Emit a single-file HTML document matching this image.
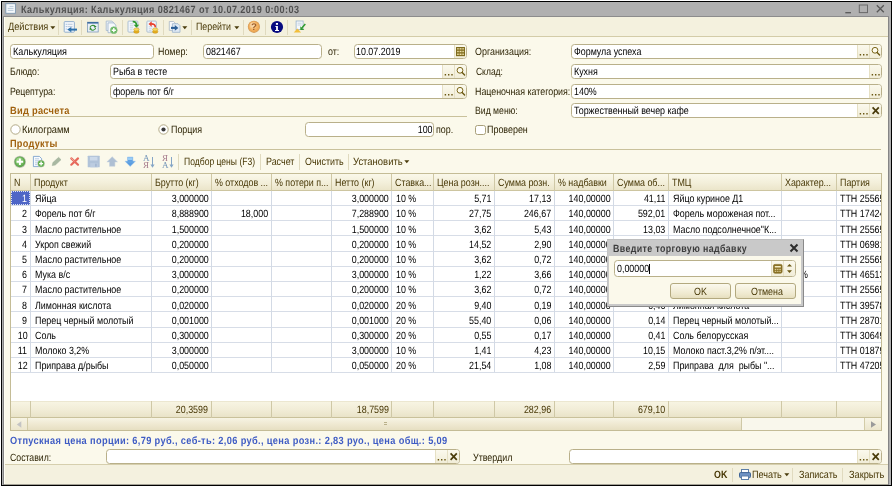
<!DOCTYPE html>
<html lang="ru"><head><meta charset="utf-8"><title>Калькуляция</title>
<style>
*{box-sizing:border-box;margin:0;padding:0}
html,body{width:892px;height:486px;overflow:hidden;background:#fff}
body{font-family:"Liberation Sans",sans-serif;font-size:10.5px;color:#000;position:relative;text-rendering:geometricPrecision}
#app{position:absolute;left:0;top:0;width:892px;height:486px;overflow:hidden;background:#fff;will-change:transform}
.a{position:absolute;white-space:nowrap}
.x{position:absolute;white-space:pre;transform:scale(0.8467,1);transform-origin:0 50%;height:14px;line-height:14px}
.xr{position:absolute;white-space:pre;transform:scale(0.8467,1);transform-origin:100% 50%;height:14px;line-height:14px}
.b{font-weight:bold}
.lb{color:#2e2506}
.br{color:#483806}
.in{position:absolute;background:#fff;border:1px solid #b9b08a;border-radius:3.5px;overflow:hidden}
.bt{position:absolute;top:0;bottom:0;background:linear-gradient(#fbf9ed,#f1edd8);border-left:1px solid #e6e0c4;color:#5a4a10}
.hd{color:#a0610e}
.ln{position:absolute;height:1px;background:#c9c19b}
.vs{position:absolute;width:1px;background:#e0dabf}
.c{position:absolute;overflow:hidden;white-space:nowrap}
.btn{position:absolute;border:1px solid #b3a97f;border-radius:3px;background:linear-gradient(#fbf9ee,#efe9cf 70%,#e6dfbf);color:#4a3c0c}
</style></head>
<body>
<div id="app">
<div class="a" style="left:1px;top:1px;width:891px;height:485px;background:#000"></div>
<div class="a" style="left:2px;top:2px;width:889px;height:483px;background:#b0b0b0"></div>
<div class="a" style="left:3px;top:17px;width:1px;height:468px;background:#858585"></div>
<div class="a" style="left:888px;top:17px;width:1px;height:468px;background:#858585"></div>
<div class="a" style="left:4px;top:17px;width:884px;height:467px;background:#fbf9eb"></div>
<div class="a" style="left:4px;top:484px;width:884px;height:1px;background:#a3a196"></div>
<div class="x b" style="top:3px;left:21.17px;transform:scale(0.863,1);letter-spacing:0.5px;color:#505050">Калькуляция: Калькуляция 0821467 от 10.07.2019 0:00:03</div>
<svg class="a" style="left:5px;top:3px" width="12" height="12" viewBox="0 0 12 12"><rect x="0.8" y="0.7" width="9.6" height="9.6" fill="#f6f9fc" stroke="#7d97b0" stroke-width="0.9"/><path d="M4.5 3.4H8.5M2.8 5.4H8.5M2.8 7.4H8.5" stroke="#b4c5d6" stroke-width="0.9"/></svg>
<svg class="a" style="left:843px;top:3px" width="44" height="13" viewBox="0 0 44 13"><path d="M2.3 9.7H8" stroke="#585858" stroke-width="1.3"/><rect x="16.3" y="2" width="8.2" height="7.6" fill="none" stroke="#6a6a6a" stroke-width="1"/><path d="M33.8 2.3L40.8 9.3M40.8 2.3L33.8 9.3" stroke="#585858" stroke-width="1.3"/></svg>
<div class="a" style="left:3px;top:16px;width:886px;height:1px;background:#8c8c8c"></div>
<div class="a" style="left:4px;top:17px;width:884px;height:19px;background:#f4f1de"></div>
<div class="a" style="left:4px;top:17px;width:1px;height:467px;background:#fffef4"></div>
<div class="ln" style="left:4px;top:36px;width:884px;background:#d3cca8"></div>
<div class="x br" style="top:20px;left:7.76px;transform:scale(0.8757,1);">Действия</div>
<svg class="a" style="left:50px;top:25.6px" width="6" height="4" viewBox="0 0 6 4"><path d="M0.3 0.3H5.3L2.8 3.2Z" fill="#4a3c0c"/></svg>
<div class="vs" style="left:58.3px;top:19.5px;height:15.0px"></div>
<svg class="a" style="left:63px;top:20px" width="15" height="14" viewBox="63 20 15 14"><rect x="64.2" y="21.6" width="10.2" height="10.6" rx="0.8" fill="#f3f7fb" stroke="#8aa9ca" stroke-width="0.9"/><path d="M67.5 24.3H72.5M67.5 26.6H72.5" stroke="#b5c4d6" stroke-width="0.9"/><path d="M65.8 24.3h0.9M65.8 26.6h0.9M65.8 29h0.9" stroke="#7fa6d4" stroke-width="0.9"/><path d="M77 29.6H70.5" stroke="#2c70ad" stroke-width="2"/><path d="M71.3 26.9L67.2 29.6L71.3 32.3Z" fill="#2c70ad"/></svg>
<div class="vs" style="left:81.2px;top:19.5px;height:15.0px"></div>
<svg class="a" style="left:86px;top:20px" width="14" height="14" viewBox="86 20 14 14"><rect x="87.4" y="22.2" width="10.8" height="9.8" fill="#e9f0f7" stroke="#7f9cbc" stroke-width="0.8"/><rect x="87.4" y="22" width="10.8" height="1.6" fill="#3f6d9f"/><path d="M90 27.6A2.9 2.5 0 0 1 95 26.2" fill="none" stroke="#3c923c" stroke-width="1.1"/><path d="M93.8 25.6L96.6 26.3L94.7 28.3Z" fill="#2f872f"/><path d="M95.6 28A2.9 2.5 0 0 1 90.6 29.4" fill="none" stroke="#3c923c" stroke-width="1.1"/><path d="M91.8 30L89 29.3L90.9 27.3Z" fill="#2f872f"/></svg>
<svg class="a" style="left:105px;top:19.5px" width="13.5" height="14.5" viewBox="105 19.5 13.5 14.5"><path d="M106.2 20.6H112L114 22.6V30H106.2Z" fill="#eef3f8" stroke="#a3b7cc" stroke-width="0.8"/><path d="M108 22.4H113.6L115.8 24.6V32.2H108Z" fill="#f6f9fc" stroke="#9db3ca" stroke-width="0.8"/><circle cx="113.8" cy="29.7" r="3.4" fill="#62b45a" stroke="#8cc486" stroke-width="0.8"/><path d="M113.8 27.6V31.8M111.7 29.7H115.9" stroke="#fff" stroke-width="1.4"/></svg>
<div class="vs" style="left:122.4px;top:19.5px;height:15.0px"></div>
<svg class="a" style="left:126.5px;top:19.5px" width="13.5" height="14.5" viewBox="126.5 19.5 13.5 14.5"><rect x="127.5" y="20.6" width="9.8" height="11" rx="0.8" fill="#f4f7fb" stroke="#9ab2cc" stroke-width="0.8"/><path d="M129.3 23.3H133M129.3 25.3H133M129.3 27.3H132.6M129.3 29.3H132" stroke="#bccbdc" stroke-width="0.8"/><path d="M132.2 21.2Q135.8 20.9 135.9 24.6" fill="none" stroke="#2f9a30" stroke-width="1.7"/><path d="M133.2 24.2H138.7L135.9 27.2Z" fill="#2f9a30"/><ellipse cx="135.9" cy="31.2" rx="2.7" ry="1.6" fill="#e8b020" stroke="#c08a10" stroke-width="0.5"/><ellipse cx="135.9" cy="29" rx="2.7" ry="1.6" fill="#f8d860" stroke="#c89818" stroke-width="0.5"/></svg>
<svg class="a" style="left:145.5px;top:19.5px" width="13.5" height="14.5" viewBox="145.5 19.5 13.5 14.5"><rect x="146.4" y="20.6" width="9.4" height="11" rx="0.8" fill="#f4f7fb" stroke="#9ab2cc" stroke-width="0.8"/><path d="M148.2 26.3H152M148.2 28.3H151.4M148.2 30.1H151" stroke="#bccbdc" stroke-width="0.8"/><path d="M154.8 26.8Q154.8 23.3 150.6 23.4" fill="none" stroke="#e8402c" stroke-width="1.7"/><path d="M151.2 20.7V26.2L148 23.5Z" fill="#e8402c"/><ellipse cx="154.7" cy="31.2" rx="2.7" ry="1.6" fill="#e8b020" stroke="#c08a10" stroke-width="0.5"/><ellipse cx="154.7" cy="29" rx="2.7" ry="1.6" fill="#f8d860" stroke="#c89818" stroke-width="0.5"/></svg>
<div class="vs" style="left:163.3px;top:19.5px;height:15.0px"></div>
<svg class="a" style="left:168px;top:20px" width="13.5" height="14" viewBox="168 20 13.5 14"><path d="M169.3 21.5H173.6L175.3 23.2V30.4H169.3Z" fill="#f6f8fb" stroke="#aab6c4" stroke-width="0.8"/><path d="M172.4 23.7H178L180 25.7V32.3H172.4Z" fill="#dfe9f4" stroke="#9ab2cc" stroke-width="0.8"/><path d="M171 27.9H175.6" stroke="#2b5f97" stroke-width="2.1"/><path d="M174.8 25.1L178.4 27.9L174.8 30.7Z" fill="#2b5f97"/></svg>
<svg class="a" style="left:182.4px;top:25.9px" width="6" height="4" viewBox="0 0 6 4"><path d="M0.3 0.3H5.3L2.8 3.2Z" fill="#4a3c0c"/></svg>
<div class="vs" style="left:191.3px;top:19.5px;height:15.0px"></div>
<div class="x br" style="top:20px;left:196.38px;transform:scale(0.8412,1);">Перейти</div>
<svg class="a" style="left:233.5px;top:25.9px" width="6" height="4" viewBox="0 0 6 4"><path d="M0.3 0.3H5.3L2.8 3.2Z" fill="#4a3c0c"/></svg>
<div class="vs" style="left:242.6px;top:19.5px;height:15.0px"></div>
<svg class="a" style="left:247px;top:19.5px" width="14" height="14.0" viewBox="247 19.5 14 14.0"><circle cx="253.9" cy="26.3" r="6.1" fill="#cf9a5c"/><circle cx="253.8" cy="26.2" r="5.5" fill="#eda855"/><circle cx="253.5" cy="25.7" r="4.4" fill="#f3b567"/><circle cx="253" cy="25" r="3.2" fill="#f8c98a"/><circle cx="252.6" cy="24.4" r="2" fill="#fcdcae"/><text x="253.9" y="29.6" text-anchor="middle" font-family="Liberation Sans, sans-serif" font-weight="bold" font-size="9.6" fill="#a0602c">?</text></svg>
<div class="vs" style="left:264.5px;top:19.5px;height:15.0px"></div>
<svg class="a" style="left:270px;top:19.5px" width="14" height="14.0" viewBox="270 19.5 14 14.0"><circle cx="277" cy="26.5" r="6.1" fill="#070a80"/><path d="M275.4 25.4H277.9V29.4H279V30.6H275V29.4H276.1V26.6H275.4Z" fill="#fff"/><rect x="275.9" y="22.5" width="2.1" height="1.8" fill="#fff"/></svg>
<div class="vs" style="left:287.3px;top:19.5px;height:15.0px"></div>
<svg class="a" style="left:292.5px;top:20px" width="13.5" height="13.5" viewBox="292.5 20 13.5 13.5"><rect x="295.6" y="21" width="7" height="8.6" fill="#f6f9fc" stroke="#9ab2cc" stroke-width="0.8"/><path d="M297 23.2H301.2M297 25H301.2" stroke="#bccbdc" stroke-width="0.8"/><path d="M304.8 24L301.3 28" stroke="#2f9a30" stroke-width="1.5"/><path d="M299.8 26.2V30H303.8Z" fill="#2f9a30"/><path d="M293.2 32.4L296.9 28.5L300.6 32.4Z" fill="#f2bf3c"/></svg>
<div class="in" style="left:10.2px;top:44px;width:143.8px;height:14.8px;"></div>
<div class="x" style="top:45px;left:12.67px;transform:scale(0.8616,1);">Калькуляция</div>
<div class="x lb" style="top:45px;left:158.38px;">Номер:</div>
<div class="in" style="left:203.3px;top:44px;width:118.7px;height:14.8px;"></div>
<div class="x" style="top:45px;left:205.68px;">0821467</div>
<div class="x lb" style="top:45px;left:328.38px;">от:</div>
<div class="in" style="left:354px;top:44px;width:113px;height:14.8px;"><div class="bt" style="right:0px;width:12px"><svg viewBox="0 0 12 13" width="12" height="13" style="position:absolute;left:0;top:0"><rect x="1.6" y="2.6" width="7.8" height="8" fill="#efe3aa" stroke="#7a6518" stroke-width="1.1"/><path d="M1.6 5.2H9.4M1.6 7.9H9.4" stroke="#7a6518" stroke-width="1.2"/><path d="M4.2 3V10.6M6.9 3V10.6" stroke="#8a7428" stroke-width="0.9"/></svg></div></div>
<div class="x" style="top:45px;left:356.38px;">10.07.2019</div>
<div class="x lb" style="top:45px;left:475.48px;transform:scale(0.8498,1);">Организация:</div>
<div class="in" style="left:571.3px;top:44px;width:310.7px;height:14.8px;"><div class="bt" style="right:0px;width:12px"><svg viewBox="0 0 12 13" width="12" height="13" style="position:absolute;left:0;top:0"><circle cx="5" cy="5.3" r="2.9" fill="#fdfbee" stroke="#7a6518" stroke-width="1"/><path d="M7.1 7.4L9.6 9.9" stroke="#6b5813" stroke-width="1.4" stroke-linecap="round"/></svg></div><div class="bt" style="right:12px;width:12px"><svg viewBox="0 0 12 13" width="12" height="13" style="position:absolute;left:0;top:0"><path d="M1.7 9h1.4v1.4h-1.4zM5 9h1.4v1.4h-1.4zM8.3 9h1.4v1.4h-1.4z" fill="#6b5813"/></svg></div></div>
<div class="x" style="top:45px;left:573.68px;">Формула успеха</div>
<div class="x lb" style="top:65px;left:10.19px;transform:scale(0.8268,1);">Блюдо:</div>
<div class="in" style="left:110.3px;top:64px;width:356.7px;height:14.8px;"><div class="bt" style="right:0px;width:12px"><svg viewBox="0 0 12 13" width="12" height="13" style="position:absolute;left:0;top:0"><circle cx="5" cy="5.3" r="2.9" fill="#fdfbee" stroke="#7a6518" stroke-width="1"/><path d="M7.1 7.4L9.6 9.9" stroke="#6b5813" stroke-width="1.4" stroke-linecap="round"/></svg></div><div class="bt" style="right:12px;width:12px"><svg viewBox="0 0 12 13" width="12" height="13" style="position:absolute;left:0;top:0"><path d="M1.7 9h1.4v1.4h-1.4zM5 9h1.4v1.4h-1.4zM8.3 9h1.4v1.4h-1.4z" fill="#6b5813"/></svg></div></div>
<div class="x" style="top:65px;left:112.68px;">Рыба в тесте</div>
<div class="x lb" style="top:65px;left:475.5px;transform:scale(0.8077,1);">Склад:</div>
<div class="in" style="left:571.3px;top:64px;width:310.7px;height:14.8px;"><div class="bt" style="right:0px;width:12px"><svg viewBox="0 0 12 13" width="12" height="13" style="position:absolute;left:0;top:0"><path d="M1.7 9h1.4v1.4h-1.4zM5 9h1.4v1.4h-1.4zM8.3 9h1.4v1.4h-1.4z" fill="#6b5813"/></svg></div></div>
<div class="x" style="top:65px;left:573.68px;">Кухня</div>
<div class="x lb" style="top:85px;left:10.18px;transform:scale(0.8335,1);">Рецептура:</div>
<div class="in" style="left:110.3px;top:83.9px;width:356.7px;height:14.9px;"><div class="bt" style="right:0px;width:12px"><svg viewBox="0 0 12 13" width="12" height="13" style="position:absolute;left:0;top:0"><circle cx="5" cy="5.3" r="2.9" fill="#fdfbee" stroke="#7a6518" stroke-width="1"/><path d="M7.1 7.4L9.6 9.9" stroke="#6b5813" stroke-width="1.4" stroke-linecap="round"/></svg></div><div class="bt" style="right:12px;width:12px"><svg viewBox="0 0 12 13" width="12" height="13" style="position:absolute;left:0;top:0"><path d="M1.7 9h1.4v1.4h-1.4zM5 9h1.4v1.4h-1.4zM8.3 9h1.4v1.4h-1.4z" fill="#6b5813"/></svg></div></div>
<div class="x" style="top:85px;left:112.68px;">форель пот б/г</div>
<div class="x lb" style="top:85px;left:475.48px;transform:scale(0.8434,1);">Наценочная категория:</div>
<div class="in" style="left:571.3px;top:83.9px;width:310.7px;height:14.9px;"><div class="bt" style="right:0px;width:12px"><svg viewBox="0 0 12 13" width="12" height="13" style="position:absolute;left:0;top:0"><path d="M1.7 9h1.4v1.4h-1.4zM5 9h1.4v1.4h-1.4zM8.3 9h1.4v1.4h-1.4z" fill="#6b5813"/></svg></div></div>
<div class="x" style="top:85px;left:573.68px;">140%</div>
<div class="x b hd" style="top:104px;left:10.16px;transform:scale(0.884,1);letter-spacing:0.3px;">Вид расчета</div>
<div class="ln" style="left:10.3px;top:116.1px;width:456.5px"></div>
<div class="x lb" style="top:104px;left:475.19px;transform:scale(0.8261,1);">Вид меню:</div>
<div class="in" style="left:571.3px;top:103.4px;width:310.7px;height:14.9px;"><div class="bt" style="right:0px;width:12px"><svg viewBox="0 0 12 13" width="12" height="13" style="position:absolute;left:0;top:0"><path d="M2.6 3.4L8.8 9.8M8.8 3.4L2.6 9.8" stroke="#4a3c0c" stroke-width="1.7"/></svg></div><div class="bt" style="right:12px;width:12px"><svg viewBox="0 0 12 13" width="12" height="13" style="position:absolute;left:0;top:0"><path d="M1.7 9h1.4v1.4h-1.4zM5 9h1.4v1.4h-1.4zM8.3 9h1.4v1.4h-1.4z" fill="#6b5813"/></svg></div></div>
<div class="x" style="top:104px;left:573.68px;">Торжественный вечер кафе</div>
<svg class="a" style="left:10px;top:124.2px" width="11" height="11" viewBox="0 0 11 11"><circle cx="5.5" cy="5.5" r="4.7" fill="#fff" stroke="#a9a07a" stroke-width="0.9"/></svg>
<div class="x lb" style="top:123px;left:22.16px;transform:scale(0.8829,1);">Килограмм</div>
<svg class="a" style="left:158.3px;top:124.2px" width="11" height="11" viewBox="0 0 11 11"><circle cx="5.5" cy="5.5" r="4.7" fill="#fff" stroke="#a9a07a" stroke-width="0.9"/><circle cx="5.5" cy="5.5" r="2.1" fill="#3a3a3a"/></svg>
<div class="x lb" style="top:123px;left:170.58px;">Порция</div>
<div class="in" style="left:305.3px;top:122.4px;width:129.0px;height:14.6px;"></div>
<div class="xr" style="top:123px;right:459.08px;">100</div>
<div class="x lb" style="top:123px;left:436.38px;">пор.</div>
<div class="a" style="left:475.3px;top:124.5px;width:10.5px;height:10.5px;border:1px solid #a9a07a;border-radius:2.5px;background:#fff"></div>
<div class="x lb" style="top:123px;left:487.38px;transform:scale(0.8499,1);">Проверен</div>
<div class="x b hd" style="top:137px;left:10.16px;transform:scale(0.873,1);letter-spacing:0.3px;">Продукты</div>
<div class="ln" style="left:10.3px;top:148.9px;width:871px"></div>
<svg class="a" style="left:13px;top:154.5px" width="14" height="14.0" viewBox="13 154.5 14 14.0"><circle cx="19.9" cy="161.4" r="6.1" fill="#c3c6b8"/><circle cx="19.9" cy="161.3" r="5.4" fill="#5ea44d"/><circle cx="19.7" cy="161" r="4.6" fill="#6db45a"/><circle cx="19.3" cy="160.4" r="3.6" fill="#85c470"/><circle cx="18.8" cy="159.7" r="2.3" fill="#a0d68b"/><path d="M19.9 158V164.6M16.6 161.3H23.2" stroke="#fff" stroke-width="1.9"/></svg>
<svg class="a" style="left:32px;top:155px" width="14" height="13.5" viewBox="32 155 14 13.5"><path d="M33.4 156.4H39.4L41.6 158.6V166.6H33.4Z" fill="#f7fafd" stroke="#6f98c8" stroke-width="0.8"/><path d="M35 158.8H39M35 160.8H40M35 162.8H38M35 164.6H37.4" stroke="#a9c0dc" stroke-width="0.8"/><circle cx="41.1" cy="163.7" r="3.6" fill="#b4bfa6"/><circle cx="41.1" cy="163.6" r="3.1" fill="#5fb04e"/><path d="M41.1 161.6V165.6M39.1 163.6H43.1" stroke="#fff" stroke-width="1.4"/></svg>
<svg class="a" style="left:51px;top:156px" width="11.5" height="11" viewBox="51 156 11.5 11"><path d="M52.2 165.6L52.9 162.6L58.6 157.3L61 159.7L55.3 165Z" fill="#a9b8a2" stroke="#9caf98" stroke-width="0.5"/></svg>
<svg class="a" style="left:69px;top:156px" width="11.5" height="11" viewBox="69 156 11.5 11"><path d="M71.3 158.4L78 164.7M78 158.4L71.3 164.7" stroke="#e6695c" stroke-width="2.2" stroke-linecap="round"/><path d="M71.6 158.6L74.2 161" stroke="#f5a99c" stroke-width="1" stroke-linecap="round"/></svg>
<svg class="a" style="left:86.5px;top:154.5px" width="13.5" height="13.0" viewBox="86.5 154.5 13.5 13.0"><rect x="87.2" y="155.2" width="12" height="11.6" rx="0.6" fill="#b1c3d9"/><rect x="89.4" y="156.4" width="7.6" height="3.6" fill="#cddaea"/><rect x="89.8" y="162.6" width="7.4" height="4.2" fill="#bccce0"/><rect x="94.6" y="163.2" width="1.6" height="3" fill="#a2b6d0"/></svg>
<svg class="a" style="left:105.5px;top:155.5px" width="12.5" height="11.0" viewBox="105.5 155.5 12.5 11.0"><path d="M111.7 156.2L117 161.4H114.4V165.8H109V161.4H106.4Z" fill="#aebfd3" stroke="#c4d0de" stroke-width="0.5"/></svg>
<svg class="a" style="left:124px;top:155.5px" width="12.5" height="11.0" viewBox="124 155.5 12.5 11.0"><path d="M130.2 165.9L135.4 160.7H132.9V156.5H127.5V160.7H125Z" fill="#5a9ce0" stroke="#9cc6ee" stroke-width="0.5"/><path d="M127.8 156.8H132.6V159.6H127.8Z" fill="#9accf5"/><path d="M126.2 160.9H134.2L133 162.1H127.4Z" fill="#6aaae6"/></svg>
<svg class="a" style="left:143.1px;top:154.5px" width="12.5" height="14" viewBox="0 0 12.5 14"><text x="0" y="6.3" font-family="Liberation Serif, serif" font-size="9" fill="#7294b8">А</text><text x="0" y="13.4" font-family="Liberation Serif, serif" font-size="9" fill="#a67b8c">Я</text><path d="M9.5 2V11" stroke="#85a5c6" stroke-width="1"/><path d="M7.4 9.6L9.5 12.8L11.6 9.6Z" fill="#85a5c6"/></svg>
<svg class="a" style="left:161.8px;top:154.5px" width="12.5" height="14" viewBox="0 0 12.5 14"><text x="0" y="6.3" font-family="Liberation Serif, serif" font-size="9" fill="#a67b8c">Я</text><text x="0" y="13.4" font-family="Liberation Serif, serif" font-size="9" fill="#7294b8">А</text><path d="M9.5 2V11" stroke="#85a5c6" stroke-width="1"/><path d="M7.4 9.6L9.5 12.8L11.6 9.6Z" fill="#85a5c6"/></svg>
<div class="vs" style="left:178.2px;top:153.5px;height:16.0px"></div>
<div class="x br" style="top:155px;left:184.39px;transform:scale(0.8158,1);">Подбор цены (F3)</div>
<div class="vs" style="left:259.6px;top:153.5px;height:16.0px"></div>
<div class="x br" style="top:155px;left:266.17px;transform:scale(0.8502,1);">Расчет</div>
<div class="vs" style="left:299.2px;top:153.5px;height:16.0px"></div>
<div class="x br" style="top:155px;left:304.98px;transform:scale(0.8445,1);">Очистить</div>
<div class="vs" style="left:348.2px;top:153.5px;height:16.0px"></div>
<div class="x br" style="top:155px;left:353.05px;transform:scale(0.9016,1);">Установить</div>
<svg class="a" style="left:404.2px;top:160.2px" width="6" height="4" viewBox="0 0 6 4"><path d="M0.3 0.3H5.3L2.8 3.2Z" fill="#4a3c0c"/></svg>
<div class="a" style="left:10.3px;top:173.4px;width:871.5px;height:257.6px;background:#fff;border:1px solid #c4bc96;overflow:hidden">
<div class="a" style="left:0;top:0;width:869.5px;height:16.6px;background:linear-gradient(#faf8ea,#f3efda 55%,#ebe5ca);border-bottom:1px solid #cdc5a0"></div>
<div class="a" style="left:18.7px;top:0;width:1px;height:16.6px;background:#cfc8a6"></div>
<div class="a" style="left:139.5px;top:0;width:1px;height:16.6px;background:#cfc8a6"></div>
<div class="a" style="left:199.7px;top:0;width:1px;height:16.6px;background:#cfc8a6"></div>
<div class="a" style="left:259.9px;top:0;width:1px;height:16.6px;background:#cfc8a6"></div>
<div class="a" style="left:320.0px;top:0;width:1px;height:16.6px;background:#cfc8a6"></div>
<div class="a" style="left:380.0px;top:0;width:1px;height:16.6px;background:#cfc8a6"></div>
<div class="a" style="left:422.0px;top:0;width:1px;height:16.6px;background:#cfc8a6"></div>
<div class="a" style="left:482.4px;top:0;width:1px;height:16.6px;background:#cfc8a6"></div>
<div class="a" style="left:542.7px;top:0;width:1px;height:16.6px;background:#cfc8a6"></div>
<div class="a" style="left:602.0px;top:0;width:1px;height:16.6px;background:#cfc8a6"></div>
<div class="a" style="left:656.8px;top:0;width:1px;height:16.6px;background:#cfc8a6"></div>
<div class="a" style="left:769.5px;top:0;width:1px;height:16.6px;background:#cfc8a6"></div>
<div class="a" style="left:824.6px;top:0;width:1px;height:16.6px;background:#cfc8a6"></div>
<div class="x br" style="top:1.6px;left:2.78px;">N</div>
<div class="x br" style="top:1.6px;left:22.78px;">Продукт</div>
<div class="x br" style="top:1.6px;left:143.58px;">Брутто (кг)</div>
<div class="x br" style="top:1.6px;left:203.78px;">% отходов ...</div>
<div class="x br" style="top:1.6px;left:263.98px;">% потери п...</div>
<div class="x br" style="top:1.6px;left:324.08px;">Нетто (кг)</div>
<div class="x br" style="top:1.6px;left:384.08px;">Ставка...</div>
<div class="x br" style="top:1.6px;left:426.08px;">Цена розн....</div>
<div class="x br" style="top:1.6px;left:486.48px;">Сумма розн.</div>
<div class="x br" style="top:1.6px;left:546.78px;">% надбавки</div>
<div class="x br" style="top:1.6px;left:606.08px;">Сумма об...</div>
<div class="x br" style="top:1.6px;left:660.88px;">ТМЦ</div>
<div class="x br" style="top:1.6px;left:773.58px;">Характер...</div>
<div class="x br" style="top:1.6px;left:828.68px;">Партия</div>
<div class="a" style="left:0;top:30.6px;width:869.5px;height:1px;background:#d7dde7"></div>
<div class="a" style="left:0;top:45.6px;width:869.5px;height:1px;background:#d7dde7"></div>
<div class="a" style="left:0;top:60.6px;width:869.5px;height:1px;background:#d7dde7"></div>
<div class="a" style="left:0;top:76.6px;width:869.5px;height:1px;background:#d7dde7"></div>
<div class="a" style="left:0;top:91.6px;width:869.5px;height:1px;background:#d7dde7"></div>
<div class="a" style="left:0;top:106.6px;width:869.5px;height:1px;background:#d7dde7"></div>
<div class="a" style="left:0;top:121.6px;width:869.5px;height:1px;background:#d7dde7"></div>
<div class="a" style="left:0;top:136.6px;width:869.5px;height:1px;background:#d7dde7"></div>
<div class="a" style="left:0;top:152.6px;width:869.5px;height:1px;background:#d7dde7"></div>
<div class="a" style="left:0;top:167.6px;width:869.5px;height:1px;background:#d7dde7"></div>
<div class="a" style="left:0;top:182.6px;width:869.5px;height:1px;background:#d7dde7"></div>
<div class="a" style="left:0;top:197.6px;width:869.5px;height:1px;background:#d7dde7"></div>
<div class="a" style="left:18.7px;top:16.6px;width:1px;height:181px;background:#d3dae5"></div>
<div class="a" style="left:139.5px;top:16.6px;width:1px;height:181px;background:#d3dae5"></div>
<div class="a" style="left:199.7px;top:16.6px;width:1px;height:181px;background:#d3dae5"></div>
<div class="a" style="left:259.9px;top:16.6px;width:1px;height:181px;background:#d3dae5"></div>
<div class="a" style="left:320.0px;top:16.6px;width:1px;height:181px;background:#d3dae5"></div>
<div class="a" style="left:380.0px;top:16.6px;width:1px;height:181px;background:#d3dae5"></div>
<div class="a" style="left:422.0px;top:16.6px;width:1px;height:181px;background:#d3dae5"></div>
<div class="a" style="left:482.4px;top:16.6px;width:1px;height:181px;background:#d3dae5"></div>
<div class="a" style="left:542.7px;top:16.6px;width:1px;height:181px;background:#d3dae5"></div>
<div class="a" style="left:602.0px;top:16.6px;width:1px;height:181px;background:#d3dae5"></div>
<div class="a" style="left:656.8px;top:16.6px;width:1px;height:181px;background:#d3dae5"></div>
<div class="a" style="left:769.5px;top:16.6px;width:1px;height:181px;background:#d3dae5"></div>
<div class="a" style="left:824.6px;top:16.6px;width:1px;height:181px;background:#d3dae5"></div>
<div class="a" style="left:-0.5px;top:16.6px;width:19.2px;height:14px;background:#4f66c6;outline:1px dotted #dfe5f7;outline-offset:-1px"></div>
<div class="xr" style="top:17.6px;right:853.48px;color:#fff;">1</div>
<div class="x" style="top:17.6px;left:23.28px;">Яйца</div>
<div class="xr" style="top:17.6px;right:672.48px;">3,000000</div>
<div class="xr" style="top:17.6px;right:492.18px;">3,000000</div>
<div class="x" style="top:17.6px;left:384.58px;">10 %</div>
<div class="xr" style="top:17.6px;right:389.78px;">5,71</div>
<div class="xr" style="top:17.6px;right:329.48px;">17,13</div>
<div class="xr" style="top:17.6px;right:270.18px;">140,00000</div>
<div class="xr" style="top:17.6px;right:215.38px;">41,11</div>
<div class="x" style="top:17.6px;left:661.38px;">Яйцо куриное Д1</div>
<div class="x" style="top:17.6px;left:829.18px;">ТТН 2556587</div>
<div class="xr" style="top:32.6px;right:853.48px;">2</div>
<div class="x" style="top:32.6px;left:23.28px;">Форель пот б/г</div>
<div class="xr" style="top:32.6px;right:672.48px;">8,888900</div>
<div class="xr" style="top:32.6px;right:612.28px;">18,000</div>
<div class="xr" style="top:32.6px;right:492.18px;">7,288900</div>
<div class="x" style="top:32.6px;left:384.58px;">10 %</div>
<div class="xr" style="top:32.6px;right:389.78px;">27,75</div>
<div class="xr" style="top:32.6px;right:329.48px;">246,67</div>
<div class="xr" style="top:32.6px;right:270.18px;">140,00000</div>
<div class="xr" style="top:32.6px;right:215.38px;">592,01</div>
<div class="x" style="top:32.6px;left:661.38px;">Форель мороженая пот...</div>
<div class="x" style="top:32.6px;left:829.18px;">ТТН 1742431</div>
<div class="xr" style="top:48.6px;right:853.48px;">3</div>
<div class="x" style="top:48.6px;left:23.28px;">Масло растительное</div>
<div class="xr" style="top:48.6px;right:672.48px;">1,500000</div>
<div class="xr" style="top:48.6px;right:492.18px;">1,500000</div>
<div class="x" style="top:48.6px;left:384.58px;">10 %</div>
<div class="xr" style="top:48.6px;right:389.78px;">3,62</div>
<div class="xr" style="top:48.6px;right:329.48px;">5,43</div>
<div class="xr" style="top:48.6px;right:270.18px;">140,00000</div>
<div class="xr" style="top:48.6px;right:215.38px;">13,03</div>
<div class="x" style="top:48.6px;left:661.38px;">Масло подсолнечное&quot;К...</div>
<div class="x" style="top:48.6px;left:829.18px;">ТТН 2556587</div>
<div class="xr" style="top:63.6px;right:853.48px;">4</div>
<div class="x" style="top:63.6px;left:23.28px;">Укроп свежий</div>
<div class="xr" style="top:63.6px;right:672.48px;">0,200000</div>
<div class="xr" style="top:63.6px;right:492.18px;">0,200000</div>
<div class="x" style="top:63.6px;left:384.58px;">10 %</div>
<div class="xr" style="top:63.6px;right:389.78px;">14,52</div>
<div class="xr" style="top:63.6px;right:329.48px;">2,90</div>
<div class="xr" style="top:63.6px;right:270.18px;">140,00000</div>
<div class="xr" style="top:63.6px;right:215.38px;">6,96</div>
<div class="x" style="top:63.6px;left:661.38px;">Укроп свежий</div>
<div class="x" style="top:63.6px;left:829.18px;">ТТН 0698123</div>
<div class="xr" style="top:78.6px;right:853.48px;">5</div>
<div class="x" style="top:78.6px;left:23.28px;">Масло растительное</div>
<div class="xr" style="top:78.6px;right:672.48px;">0,200000</div>
<div class="xr" style="top:78.6px;right:492.18px;">0,200000</div>
<div class="x" style="top:78.6px;left:384.58px;">10 %</div>
<div class="xr" style="top:78.6px;right:389.78px;">3,62</div>
<div class="xr" style="top:78.6px;right:329.48px;">0,72</div>
<div class="xr" style="top:78.6px;right:270.18px;">140,00000</div>
<div class="xr" style="top:78.6px;right:215.38px;">1,73</div>
<div class="x" style="top:78.6px;left:661.38px;">Масло подсолнечное&quot;К...</div>
<div class="x" style="top:78.6px;left:829.18px;">ТТН 2556587</div>
<div class="xr" style="top:93.6px;right:853.48px;">6</div>
<div class="x" style="top:93.6px;left:23.28px;">Мука в/с</div>
<div class="xr" style="top:93.6px;right:672.48px;">3,000000</div>
<div class="xr" style="top:93.6px;right:492.18px;">3,000000</div>
<div class="x" style="top:93.6px;left:384.58px;">10 %</div>
<div class="xr" style="top:93.6px;right:389.78px;">1,22</div>
<div class="xr" style="top:93.6px;right:329.48px;">3,66</div>
<div class="xr" style="top:93.6px;right:270.18px;">140,00000</div>
<div class="xr" style="top:93.6px;right:215.38px;">8,78</div>
<div class="x" style="top:93.6px;left:661.38px;">Мука пшеничная в/с</div>
<div class="xr" style="top:93.6px;right:73.18px;">М54-28%</div>
<div class="x" style="top:93.6px;left:829.18px;">ТТН 4651380</div>
<div class="xr" style="top:108.6px;right:853.48px;">7</div>
<div class="x" style="top:108.6px;left:23.28px;">Масло растительное</div>
<div class="xr" style="top:108.6px;right:672.48px;">0,200000</div>
<div class="xr" style="top:108.6px;right:492.18px;">0,200000</div>
<div class="x" style="top:108.6px;left:384.58px;">10 %</div>
<div class="xr" style="top:108.6px;right:389.78px;">3,62</div>
<div class="xr" style="top:108.6px;right:329.48px;">0,72</div>
<div class="xr" style="top:108.6px;right:270.18px;">140,00000</div>
<div class="xr" style="top:108.6px;right:215.38px;">1,73</div>
<div class="x" style="top:108.6px;left:661.38px;">Масло подсолнечное&quot;К...</div>
<div class="x" style="top:108.6px;left:829.18px;">ТТН 2556587</div>
<div class="xr" style="top:124.6px;right:853.48px;">8</div>
<div class="x" style="top:124.6px;left:23.28px;">Лимонная кислота</div>
<div class="xr" style="top:124.6px;right:672.48px;">0,020000</div>
<div class="xr" style="top:124.6px;right:492.18px;">0,020000</div>
<div class="x" style="top:124.6px;left:384.58px;">20 %</div>
<div class="xr" style="top:124.6px;right:389.78px;">9,40</div>
<div class="xr" style="top:124.6px;right:329.48px;">0,19</div>
<div class="xr" style="top:124.6px;right:270.18px;">140,00000</div>
<div class="xr" style="top:124.6px;right:215.38px;">0,46</div>
<div class="x" style="top:124.6px;left:661.38px;">Лимонная кислота</div>
<div class="x" style="top:124.6px;left:829.18px;">ТТН 3957801</div>
<div class="xr" style="top:139.6px;right:853.48px;">9</div>
<div class="x" style="top:139.6px;left:23.28px;">Перец черный молотый</div>
<div class="xr" style="top:139.6px;right:672.48px;">0,001000</div>
<div class="xr" style="top:139.6px;right:492.18px;">0,001000</div>
<div class="x" style="top:139.6px;left:384.58px;">20 %</div>
<div class="xr" style="top:139.6px;right:389.78px;">55,40</div>
<div class="xr" style="top:139.6px;right:329.48px;">0,06</div>
<div class="xr" style="top:139.6px;right:270.18px;">140,00000</div>
<div class="xr" style="top:139.6px;right:215.38px;">0,14</div>
<div class="x" style="top:139.6px;left:661.38px;">Перец черный молотый...</div>
<div class="x" style="top:139.6px;left:829.18px;">ТТН 2870145</div>
<div class="xr" style="top:154.6px;right:853.48px;">10</div>
<div class="x" style="top:154.6px;left:23.28px;">Соль</div>
<div class="xr" style="top:154.6px;right:672.48px;">0,300000</div>
<div class="xr" style="top:154.6px;right:492.18px;">0,300000</div>
<div class="x" style="top:154.6px;left:384.58px;">20 %</div>
<div class="xr" style="top:154.6px;right:389.78px;">0,55</div>
<div class="xr" style="top:154.6px;right:329.48px;">0,17</div>
<div class="xr" style="top:154.6px;right:270.18px;">140,00000</div>
<div class="xr" style="top:154.6px;right:215.38px;">0,41</div>
<div class="x" style="top:154.6px;left:661.38px;">Соль белорусская</div>
<div class="x" style="top:154.6px;left:829.18px;">ТТН 3064912</div>
<div class="xr" style="top:169.6px;right:853.48px;">11</div>
<div class="x" style="top:169.6px;left:23.28px;">Молоко 3,2%</div>
<div class="xr" style="top:169.6px;right:672.48px;">3,000000</div>
<div class="xr" style="top:169.6px;right:492.18px;">3,000000</div>
<div class="x" style="top:169.6px;left:384.58px;">10 %</div>
<div class="xr" style="top:169.6px;right:389.78px;">1,41</div>
<div class="xr" style="top:169.6px;right:329.48px;">4,23</div>
<div class="xr" style="top:169.6px;right:270.18px;">140,00000</div>
<div class="xr" style="top:169.6px;right:215.38px;">10,15</div>
<div class="x" style="top:169.6px;left:661.38px;">Молоко паст.3,2% п/эт....</div>
<div class="x" style="top:169.6px;left:829.18px;">ТТН 0187934</div>
<div class="xr" style="top:184.6px;right:853.48px;">12</div>
<div class="x" style="top:184.6px;left:23.28px;">Приправа д/рыбы</div>
<div class="xr" style="top:184.6px;right:672.48px;">0,050000</div>
<div class="xr" style="top:184.6px;right:492.18px;">0,050000</div>
<div class="x" style="top:184.6px;left:384.58px;">20 %</div>
<div class="xr" style="top:184.6px;right:389.78px;">21,54</div>
<div class="xr" style="top:184.6px;right:329.48px;">1,08</div>
<div class="xr" style="top:184.6px;right:270.18px;">140,00000</div>
<div class="xr" style="top:184.6px;right:215.38px;">2,59</div>
<div class="x" style="top:184.6px;left:661.38px;">Приправа  для  рыбы &quot;...</div>
<div class="x" style="top:184.6px;left:829.18px;">ТТН 4720561</div>
<div class="a" style="left:0;top:226.6px;width:869.5px;height:17px;background:linear-gradient(#f7f4e2,#f1ecd6 55%,#e9e3c8);border-top:1px solid #ece7d0;border-bottom:1px solid #c9c19b"></div>
<div class="a" style="left:18.7px;top:226.6px;width:1px;height:17px;background:#cfc8a6"></div>
<div class="a" style="left:139.5px;top:226.6px;width:1px;height:17px;background:#cfc8a6"></div>
<div class="a" style="left:199.7px;top:226.6px;width:1px;height:17px;background:#cfc8a6"></div>
<div class="a" style="left:259.9px;top:226.6px;width:1px;height:17px;background:#cfc8a6"></div>
<div class="a" style="left:320.0px;top:226.6px;width:1px;height:17px;background:#cfc8a6"></div>
<div class="a" style="left:380.0px;top:226.6px;width:1px;height:17px;background:#cfc8a6"></div>
<div class="a" style="left:422.0px;top:226.6px;width:1px;height:17px;background:#cfc8a6"></div>
<div class="a" style="left:482.4px;top:226.6px;width:1px;height:17px;background:#cfc8a6"></div>
<div class="a" style="left:542.7px;top:226.6px;width:1px;height:17px;background:#cfc8a6"></div>
<div class="a" style="left:602.0px;top:226.6px;width:1px;height:17px;background:#cfc8a6"></div>
<div class="a" style="left:656.8px;top:226.6px;width:1px;height:17px;background:#cfc8a6"></div>
<div class="a" style="left:769.5px;top:226.6px;width:1px;height:17px;background:#cfc8a6"></div>
<div class="a" style="left:824.6px;top:226.6px;width:1px;height:17px;background:#cfc8a6"></div>
<div class="xr br" style="top:228.6px;right:672.48px;">20,3599</div>
<div class="xr br" style="top:228.6px;right:492.18px;">18,7599</div>
<div class="xr br" style="top:228.6px;right:329.48px;">282,96</div>
<div class="xr br" style="top:228.6px;right:215.38px;">679,10</div>
<div class="a" style="left:0;top:243.6px;width:869.5px;height:12px;background:#f9f7ec"></div>
<div class="a" style="left:0;top:243.6px;width:17px;height:12px;background:linear-gradient(#f7f4e4,#ece6cd);border-right:1px solid #d3cca8"><svg width="17" height="13" viewBox="0 0 17 13" style="position:absolute;left:0;top:0"><path d="M10.3 3.2V9.8L5.8 6.5Z" fill="#c4c4c4"/></svg></div>
<div class="a" style="left:17px;top:243.6px;width:714.1px;height:12px;background:linear-gradient(#f7f4e4,#efe9d2 50%,#e6dfc2);border-right:1px solid #cfc8a6"><div class="a" style="left:355.5px;top:4px;width:3px;height:1px;background:#b9b08a"></div><div class="a" style="left:355.5px;top:6px;width:3px;height:1px;background:#b9b08a"></div></div>
<div class="a" style="left:853.1px;top:243.6px;width:16.4px;height:12px;background:linear-gradient(#f7f4e4,#ece6cd);border-left:1px solid #d3cca8"><svg width="17" height="13" viewBox="0 0 17 13" style="position:absolute;left:0;top:0"><path d="M6 3.2V9.8L11 6.5Z" fill="#9a9a9a"/></svg></div>
</div>
<div class="x b" style="top:434px;left:10.46px;transform:scale(0.8794,1);letter-spacing:0.4px;color:#3f5cc4">Отпускная цена порции: 6,79 руб., себ-ть: 2,06 руб., цена розн.: 2,83 руо., цена общ.: 5,09</div>
<div class="x lb" style="top:451px;left:10.49px;transform:scale(0.8291,1);">Составил:</div>
<div class="in" style="left:106.4px;top:449.4px;width:353.6px;height:15.0px;"><div class="bt" style="right:0px;width:12px"><svg viewBox="0 0 12 13" width="12" height="13" style="position:absolute;left:0;top:0"><path d="M2.6 3.4L8.8 9.8M8.8 3.4L2.6 9.8" stroke="#4a3c0c" stroke-width="1.7"/></svg></div><div class="bt" style="right:12px;width:12px"><svg viewBox="0 0 12 13" width="12" height="13" style="position:absolute;left:0;top:0"><path d="M1.7 9h1.4v1.4h-1.4zM5 9h1.4v1.4h-1.4zM8.3 9h1.4v1.4h-1.4z" fill="#6b5813"/></svg></div></div>
<div class="x lb" style="top:451px;left:473.38px;">Утвердил</div>
<div class="in" style="left:569px;top:449.4px;width:313px;height:15.0px;"><div class="bt" style="right:0px;width:12px"><svg viewBox="0 0 12 13" width="12" height="13" style="position:absolute;left:0;top:0"><path d="M2.6 3.4L8.8 9.8M8.8 3.4L2.6 9.8" stroke="#4a3c0c" stroke-width="1.7"/></svg></div><div class="bt" style="right:12px;width:12px"><svg viewBox="0 0 12 13" width="12" height="13" style="position:absolute;left:0;top:0"><path d="M1.7 9h1.4v1.4h-1.4zM5 9h1.4v1.4h-1.4zM8.3 9h1.4v1.4h-1.4z" fill="#6b5813"/></svg></div></div>
<div class="a" style="left:5px;top:464px;width:883px;height:20px;background:#f4f1df;border-top:1px solid #d6cfae"></div>
<div class="x b br" style="top:468px;left:714.38px;">OK</div>
<div class="vs" style="left:731.5px;top:467.5px;height:14.5px"></div>
<svg class="a" style="left:738.5px;top:469px" width="12" height="11" viewBox="0 0 12 11"><rect x="2.5" y="0.5" width="7" height="4" fill="#fff" stroke="#5c7ea8"/><rect x="0.5" y="3.6" width="11" height="5" rx="1" fill="#6f93c4" stroke="#3f6496"/><rect x="2.5" y="7" width="7" height="3.5" fill="#fff" stroke="#5c7ea8"/></svg>
<div class="x br" style="top:468px;left:752.47px;transform:scale(0.8662,1);">Печать</div>
<svg class="a" style="left:783.5px;top:473.2px" width="6" height="4" viewBox="0 0 6 4"><path d="M0.3 0.3H5.3L2.8 3.2Z" fill="#4a3c0c"/></svg>
<div class="vs" style="left:792.3px;top:467.5px;height:14.5px"></div>
<div class="x br" style="top:468px;left:798.77px;transform:scale(0.858,1);">Записать</div>
<div class="vs" style="left:841.6px;top:467.5px;height:14.5px"></div>
<div class="x br" style="top:468px;left:848.76px;transform:scale(0.8729,1);">Закрыть</div>
<div class="a" style="left:607px;top:239px;width:197px;height:68px;background:#c9c9c9;border:1px solid;border-color:#bdbdbd #8a8a8a #8a8a8a #c4c4c4"></div>
<div class="a" style="left:609px;top:256px;width:192px;height:48px;background:#fbf9eb"></div>
<div class="x b" style="top:242px;left:612.58px;transform:scale(0.842,1);letter-spacing:0.45px;color:#3c3c3c">Введите торговую надбавку</div>
<svg class="a" style="left:788.5px;top:243px" width="10" height="10" viewBox="0 0 10 10"><path d="M1.5 1.5L8.5 8.5M8.5 1.5L1.5 8.5" stroke="#2c2c2c" stroke-width="2"/></svg>
<div class="in" style="left:614.3px;top:260px;width:181.4px;height:17px;"><div class="bt" style="right:0px;width:12px"><svg viewBox="0 0 12 15" width="12" height="15" style="position:absolute;left:0;top:0"><path d="M3 5.6L5.5 3L8 5.6Z" fill="#6b5813"/><path d="M3 9.2L5.5 11.9L8 9.2Z" fill="#6b5813"/></svg></div><div class="bt" style="right:12px;width:12px"><svg viewBox="0 0 12 15" width="12" height="15" style="position:absolute;left:0;top:0"><rect x="1.5" y="3.4" width="8.6" height="8.8" rx="1.4" fill="#8c7326" stroke="#7a6218" stroke-width="0.6"/><rect x="2.8" y="5" width="6" height="1.5" fill="#f3ebc4"/><path d="M2.8 8.4H8.8M2.8 10.3H8.8" stroke="#efe4b4" stroke-width="0.9"/><path d="M4.7 7.5V11.2M6.9 7.5V11.2" stroke="#8c7326" stroke-width="0.9"/></svg></div></div>
<div class="x" style="top:262px;left:616.68px;">0,00000</div>
<div class="a" style="left:648.6px;top:263.5px;width:1px;height:10.3px;background:#000"></div>
<div class="btn" style="left:670.3px;top:283.3px;width:60.5px;height:15.4px"></div>
<div class="btn" style="left:735px;top:283.3px;width:60.6px;height:15.4px"></div>
<div class="x br" style="top:285px;left:694.08px;">OK</div>
<div class="x br" style="top:285px;left:750.58px;">Отмена</div>
</div>
</body></html>
